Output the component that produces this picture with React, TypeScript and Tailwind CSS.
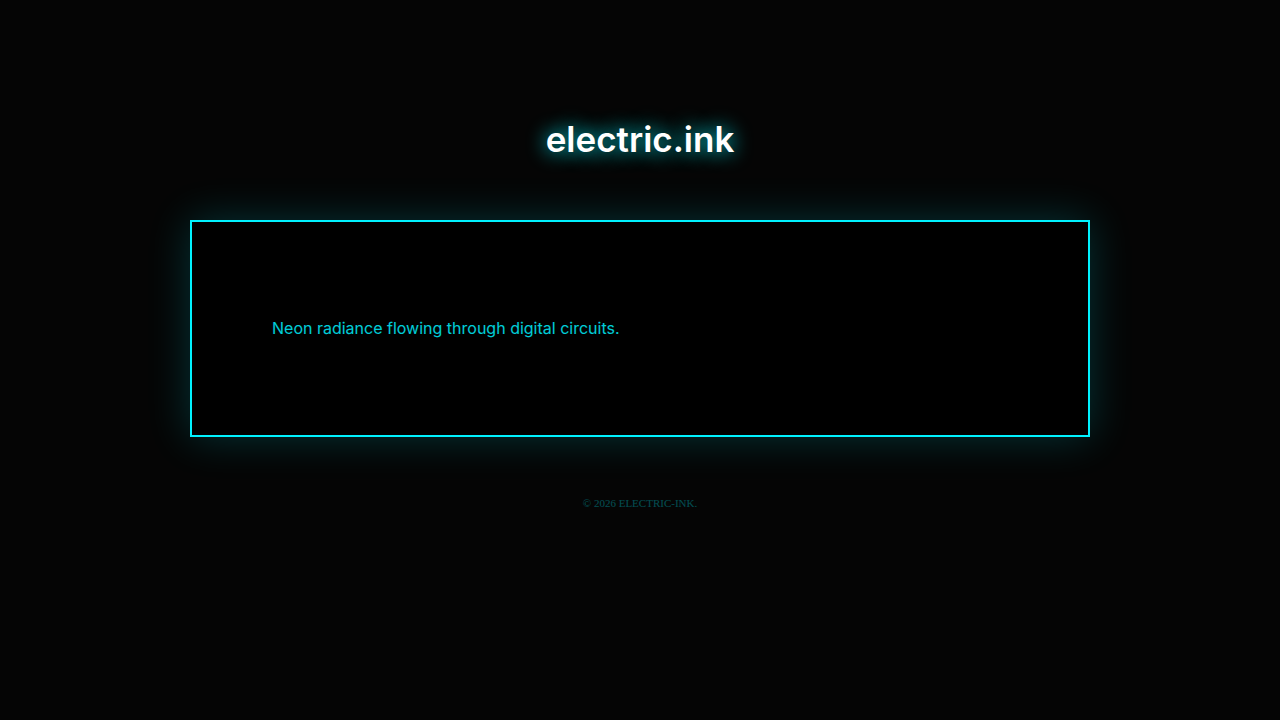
const App = () => {
  return (
    <div className="min-h-screen bg-[#050505] px-5 py-[120px] font-['Liberation_Serif',serif] text-[#00f2ff]">
      <div className="mx-auto max-w-[900px]">
        <header className="pb-[62px] text-center">
          <h1 className="font-['Inter',sans-serif] text-[35px] leading-[38px] font-semibold text-white [text-shadow:0_0_20px_#00f2ff]">
            electric.ink
          </h1>
        </header>

        <main className="border-2 border-[#00f2ff] bg-black p-20 shadow-[0_0_40px_rgba(0,242,255,0.2)]">
          <p className="my-4 font-['Inter',sans-serif] text-base leading-[21px] font-normal text-[#00f2ff]/85">
            Neon radiance flowing through digital circuits.
          </p>
        </main>

        <footer className="mt-[60px] text-center text-[11px] leading-[13px] opacity-30">
          © 2026 ELECTRIC-INK.
        </footer>
      </div>
    </div>
  );
};

export default App;
